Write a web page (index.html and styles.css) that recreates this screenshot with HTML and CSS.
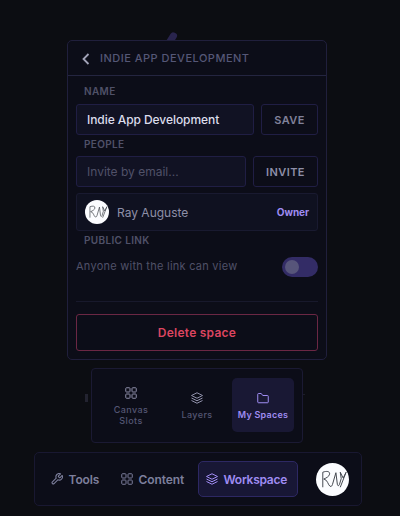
FILE: index.html
```html
<!DOCTYPE html>
<html lang="en">
<head>
    <meta charset="UTF-8">
    <meta name="viewport" content="width=device-width, initial-scale=1.0">
    <title>Workspace</title>
    <link rel="stylesheet" href="styles.css">
</head>

<body>
    <!-- shared icons -->
    <svg class="sprite">
        <symbol id="grid" viewBox="0 0 24 24">
            <rect x="1.500" y="1.500" width="8.500" height="8.500" rx="1.500"/>
            <rect x="14" y="1.500" width="8.500" height="8.500" rx="1.500"/>
            <rect x="1.500" y="14" width="8.500" height="8.500" rx="1.500"/>
            <rect x="14" y="14" width="8.500" height="8.500" rx="1.500"/>
        </symbol>
        <symbol id="layers" viewBox="0 0 24 24">
            <path d="M12 1.500L23 7l-11 5.500L1 7z"/>
            <path d="M1 12l11 5.500L23 12"/>
            <path d="M1 17l11 5.500L23 17"/>
        </symbol>
        <symbol id="logo" viewBox="0 0 34 34">
            <circle cx="17" cy="17" r="17" fill="#fbfcff"/>
            <path d="M7 25V9.500c4-1.500 7.500-1 7 2-.5 2.500-3.500 4-6 5 4 .5 4.500 6.500 6.500 7.500 1.500.5 2-.5 2.500-2L20.500 10l1.500 12c.3 1.800 1.600 1.800 2.200 0L26 16l-1-6.500 3 6 3-6L25 25" fill="none" stroke="#40444c" stroke-width="1" stroke-linejoin="round"/>
        </symbol>
    </svg>

    <div class="mark mark-top"></div>
    <div class="mark mark-side"></div>
    <div class="mark mark-dash"></div>

    <div class="panel">
        <div class="panel-header">
            <svg class="back" viewBox="0 0 8 12"><path d="M6.500 1L1.500 6l5 5"/></svg>
            <span>INDIE APP DEVELOPMENT</span>
        </div>
        <div class="panel-body">
            <div class="label">NAME</div>
            <div class="row">
                <input class="input input-name" type="text" value="Indie App Development">
                <button class="button">SAVE</button>
            </div>
            <div class="label label-people">PEOPLE</div>
            <div class="row">
                <input class="input" type="text" placeholder="Invite by email...">
                <button class="button button-invite">INVITE</button>
            </div>
            <div class="member">
                <svg class="member-avatar"><use href="#logo"/></svg>
                <span class="member-name">Ray Auguste</span>
                <span class="member-role">Owner</span>
            </div>
            <div class="label label-link">PUBLIC LINK</div>
            <div class="link-row">
                <span>Anyone with the link can view</span>
                <div class="toggle"><div class="knob"></div></div>
            </div>
            <div class="danger">
                <button class="delete">Delete space</button>
            </div>
        </div>
    </div>

    <div class="submenu">
        <div class="tab">
            <svg class="icon"><use href="#grid"/></svg>
            <span>Canvas Slots</span>
        </div>
        <div class="tab">
            <svg class="icon"><use href="#layers"/></svg>
            <span>Layers</span>
        </div>
        <div class="tab active">
            <svg class="icon" viewBox="0 0 24 24"><path d="M1.500 20V4.500C1.500 3.500 2 3 3 3h5.500l3 4H21c1 0 1.500.5 1.500 1.500V20c0 1-.5 1.500-1.500 1.500H3c-1 0-1.500-.5-1.500-1.500z"/></svg>
            <span>My Spaces</span>
        </div>
    </div>

    <div class="nav">
        <div class="nav-item">
            <svg class="icon" viewBox="1 1 22 22"><path d="M14.700 6.300a1 1 0 0 0 0 1.400l1.600 1.600a1 1 0 0 0 1.400 0l3.770-3.770a6 6 0 0 1-7.940 7.940l-6.910 6.910a2.120 2.120 0 0 1-3-3l6.910-6.910a6 6 0 0 1 7.940-7.940l-3.760 3.760z"/></svg>
            <span>Tools</span>
        </div>
        <div class="nav-item nav-content">
            <svg class="icon"><use href="#grid"/></svg>
            <span>Content</span>
        </div>
        <div class="nav-item active">
            <svg class="icon"><use href="#layers"/></svg>
            <span>Workspace</span>
        </div>
        <svg class="nav-avatar"><use href="#logo"/></svg>
    </div>
</body>
</html>
```
FILE: styles.css
```css
* {
    box-sizing: border-box;
}
body {
    margin: 0;
    width: 400px;
    height: 516px;
    padding: 40px 6px 0 0;
    display: flex;
    flex-direction: column;
    align-items: center;
    overflow: hidden;
    position: relative;
    background-color: #0c0d12;
    font-family: Inter, "Liberation Sans", sans-serif;
    color: #8f90a8;
}
.sprite {
    position: absolute;
    width: 0;
    height: 0;
}
/* bits of the canvas that show behind the menus */
.mark {
    position: absolute;
}
.mark-top {
    left: 168px;
    top: 32px;
    width: 7px;
    height: 14px;
    border-radius: 3px;
    background-color: #29244d;
    transform: rotate(32deg);
}
.mark-side {
    left: 85px;
    top: 394px;
    width: 3px;
    height: 8px;
    background-color: #232330;
}
.mark-dash {
    left: 302px;
    top: 394px;
    width: 3px;
    height: 1px;
    background-color: #1d1d29;
}
.panel {
    width: 260px;
    height: 320px;
    flex: none;
    position: relative;
    border: 1px solid #201f3c;
    border-radius: 5px;
    background-color: #0c0d18;
}
.panel-header {
    height: 35px;
    display: flex;
    align-items: center;
    padding-left: 14px;
    gap: 10px;
    border-bottom: 1px solid #242540;
    font-size: 11px;
    font-weight: 500;
    letter-spacing: 0.49px;
    color: #555776;
}
.back {
    width: 8px;
    height: 12px;
    margin-top: 2px;
    fill: none;
    stroke: #a2a3b8;
    stroke-width: 1.8;
}
.panel-body {
    padding: 8px 8px 0;
}
.label {
    height: 20px;
    padding-left: 8px;
    font-size: 10px;
    font-weight: 600;
    line-height: 15px;
    letter-spacing: 0.35px;
    color: #505168;
}
.label-people {
    height: 21px;
    line-height: 19px;
}
.label-link {
    height: 26px;
    line-height: 19px;
}
.row {
    display: flex;
    gap: 7px;
    height: 31px;
}
.input {
    flex: 1;
    min-width: 0;
    padding: 0 10px;
    border: 1px solid #201e44;
    border-radius: 3px;
    background-color: #111223;
    font-family: inherit;
    font-size: 12px;
    color: #dcddec;
}
.input-name {
    font-weight: 500;
    letter-spacing: -0.07px;
}
.input::placeholder {
    color: #505168;
}
.button {
    width: 57px;
    padding: 0;
    border: 1px solid #201e44;
    border-radius: 3px;
    background-color: #0c0d18;
    font-family: inherit;
    font-size: 11px;
    font-weight: 600;
    letter-spacing: 0.4px;
    color: #80819a;
}
.button-invite {
    width: 65px;
    color: #8e8fa8;
}
.member {
    display: flex;
    align-items: center;
    height: 38px;
    margin-top: 6px;
    padding: 0 8px;
    border: 1px solid #191a30;
    border-radius: 3px;
    background-color: #0f1120;
}
.member-avatar {
    width: 24px;
    height: 24px;
}
.member-name {
    margin-left: 8px;
    font-size: 12px;
    color: #8e8fa8;
}
.member-role {
    margin-left: auto;
    font-size: 10px;
    font-weight: 700;
    letter-spacing: -0.05px;
    color: #9f8cf2;
}
.link-row {
    display: flex;
    align-items: center;
    justify-content: space-between;
    height: 20px;
    font-size: 11px;
    line-height: 18px;
    letter-spacing: 0.25px;
    color: #505168;
}
.link-row span {
    padding-bottom: 2px;
}
.toggle {
    width: 36px;
    height: 20px;
    padding: 3px;
    border-radius: 10px;
    background-color: #332c66;
}
.knob {
    width: 14px;
    height: 14px;
    border-radius: 50%;
    background-color: #57557a;
}
.danger {
    margin-top: 24px;
    padding-top: 12px;
    border-top: 1px solid #18192c;
}
.delete {
    width: 100%;
    height: 37px;
    border: 1px solid #6b2744;
    border-radius: 3px;
    background-color: #0c0d18;
    font-family: inherit;
    font-size: 12px;
    font-weight: 600;
    letter-spacing: 0.25px;
    color: #dc4560;
}
.icon {
    width: 12px;
    height: 12px;
    flex: none;
    fill: none;
    stroke: currentColor;
    stroke-width: 2;
    stroke-linejoin: round;
}
.submenu {
    display: grid;
    grid-template-columns: 62px 62px 62px;
    gap: 4px;
    width: 212px;
    height: 75px;
    flex: none;
    margin-top: 8px;
    padding: 9px 8px 10px;
    position: relative;
    border: 1px solid #1b1a33;
    border-radius: 4px;
    background-color: #0c0d18;
}
.tab {
    display: flex;
    flex-direction: column;
    align-items: center;
    justify-content: center;
    gap: 5px;
    padding: 2px 10px 0;
    border-radius: 5px;
    font-size: 9px;
    font-weight: 500;
    line-height: 11px;
    letter-spacing: 0.4px;
    text-align: center;
    color: #545673;
}
.tab .icon {
    stroke: #8e8fa8;
}
.tab.active {
    padding: 2px 0 0;
    background-color: #191834;
    font-weight: 600;
    letter-spacing: 0.25px;
    color: #9f8cf2;
}
.tab.active .icon {
    stroke: #9f8cf2;
}
.nav {
    display: flex;
    align-items: center;
    width: 328px;
    height: 54px;
    flex: none;
    margin: 9px 0 0 1px;
    padding: 0 12px 0 9px;
    border: 1px solid #191831;
    border-radius: 5px;
    background-color: #0c0d18;
}
.nav-item {
    display: flex;
    align-items: center;
    gap: 6px;
    width: 70px;
    height: 36px;
    padding: 0 0 0 7px;
    font-size: 12px;
    font-weight: 600;
    letter-spacing: -0.1px;
    color: #7d7f9c;
}
.nav-content {
    width: 84px;
}
.nav-item.active {
    width: 100px;
    padding: 0 7px;
    border: 1px solid #2d2863;
    border-radius: 5px;
    background-color: #181735;
    letter-spacing: -0.27px;
    color: #9f8cf2;
}
.nav-avatar {
    width: 33px;
    height: 33px;
    margin-left: auto;
}
```
